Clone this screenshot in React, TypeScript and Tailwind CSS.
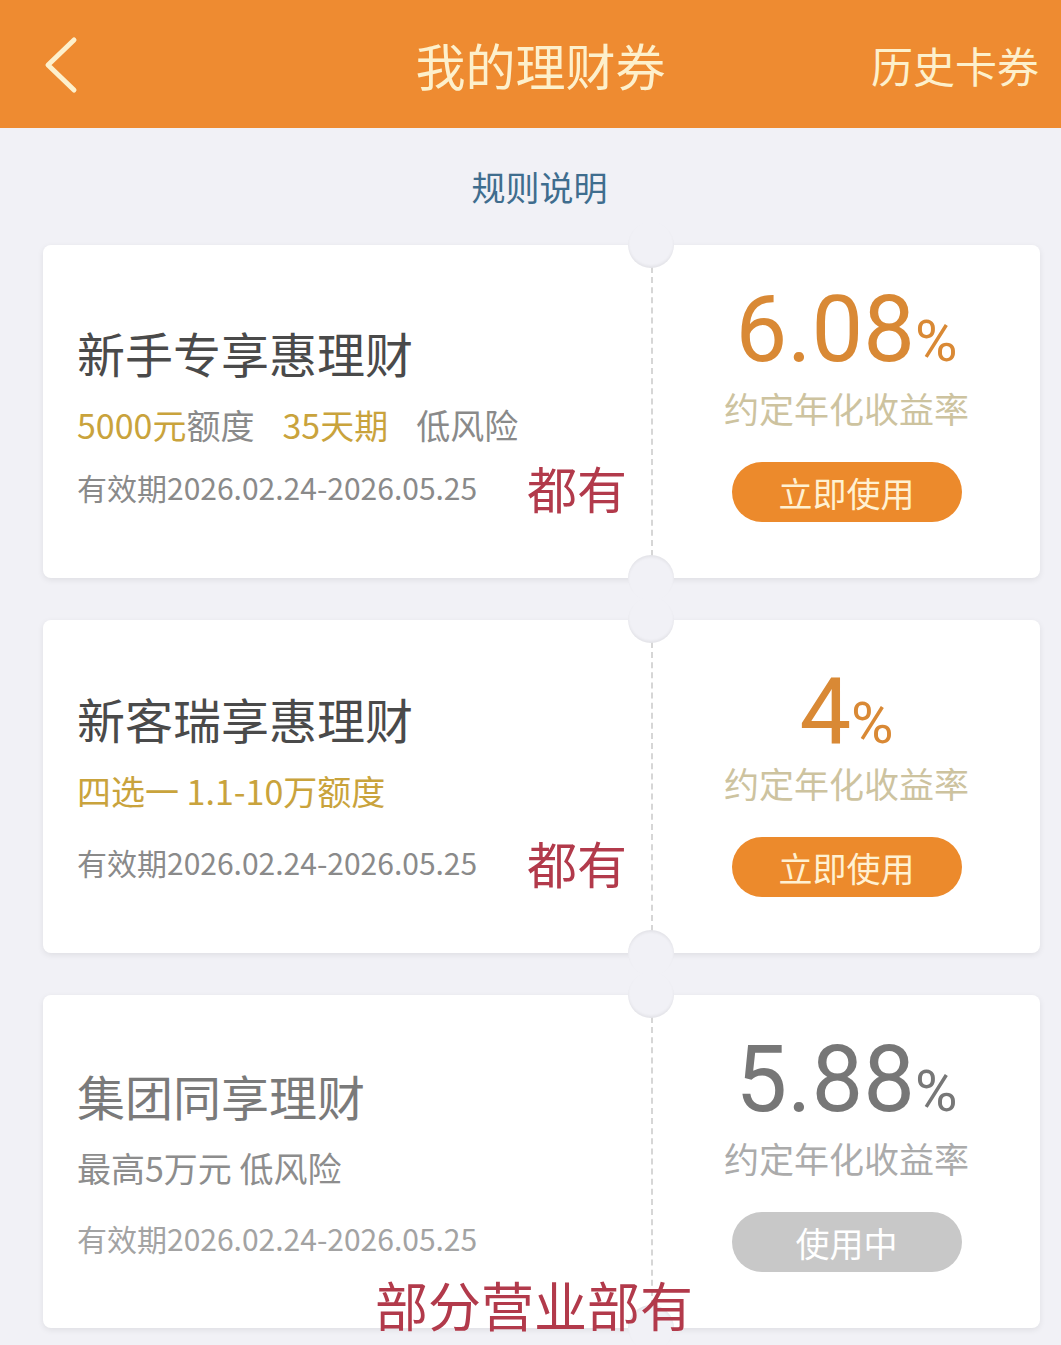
import React from 'react';

const cjk = { fontFamily: '"Noto Sans CJK SC", "Noto Sans", sans-serif' };
const num = { fontFamily: 'Roboto, "Noto Sans", sans-serif' };

type Coupon = {
  title: string;
  tags: React.ReactNode;
  rate: string;
  active: boolean;
  note?: string;
  top: number;
  dateGap: number;
  numShift: number;
};

function CouponCard({ c }: { c: Coupon }) {
  const titleColor = c.active ? 'text-[#4a4a4a]' : 'text-[#7a7a7a]';
  const dateColor = c.active ? 'text-[#8a8a8a]' : 'text-[#a3a3a3]';
  return (
    <div className="relative flex h-[333px] rounded-lg bg-white shadow-[0_2px_6px_rgba(0,0,0,0.08)]">
      <div className="flex w-[608px] flex-col pl-[34px] pr-[24px]" style={{ paddingTop: c.top }}>
        <div className={`h-[60px] text-[48px] leading-[60px] ${titleColor}`}>{c.title}</div>
        <div className="mt-[18px] h-[50px] text-[34px] leading-[50px]">{c.tags}</div>
        <div className="flex h-[44px] items-center justify-between" style={{ marginTop: c.dateGap }}>
          <span className={`text-[30px] leading-[44px] ${dateColor}`}>有效期2026.02.24-2026.05.25</span>
          {c.note && <span className="text-[50px] leading-[44px] text-[#b23a4b]">{c.note}</span>}
        </div>
      </div>

      <div className="border-l-2 border-dashed border-[#d6d6d6] my-[22px]" />

      <div className="flex flex-1 flex-col items-center pt-[40px]">
        <div
          className={`flex h-[90px] items-baseline leading-[90px] ${c.active ? 'text-[#d98935]' : 'text-[#777777]'}`}
          style={{ ...num, marginTop: c.numShift, marginBottom: -c.numShift }}
        >
          <span className="text-[92px]">{c.rate}</span>
          <span className="text-[58px]">%</span>
        </div>
        <div className={`mt-[11px] h-[44px] text-[35px] leading-[44px] ${c.active ? 'text-[#cdc39f]' : 'text-[#ababab]'}`}>
          约定年化收益率
        </div>
        <div
          className={`mt-[32px] flex h-[60px] w-[230px] items-center justify-center rounded-full text-[34px] ${
            c.active ? 'bg-[#ec8a2c] text-[#fff1d2]' : 'bg-[#c8c8c8] text-white'
          }`}
        >
          {c.active ? '立即使用' : '使用中'}
        </div>
      </div>

      <div className="absolute left-[585px] top-[-23px] h-[46px] w-[46px] rounded-full bg-[#f1f1f6] shadow-[inset_0_-2px_3px_rgba(0,0,0,0.06)]" />
      <div className="absolute bottom-[-23px] left-[585px] h-[46px] w-[46px] rounded-full bg-[#f1f1f6] shadow-[inset_0_2px_3px_rgba(0,0,0,0.06)]" />
    </div>
  );
}

export default function App() {
  const coupons: Coupon[] = [
    {
      title: '新手专享惠理财',
      tags: (
        <>
          <span className="text-[#c9a33c]">5000元</span>
          <span className="text-[#8a8a8a]">额度</span>
          <span className="ml-[28px] text-[#c9a33c]">35天期</span>
          <span className="ml-[28px] text-[#8a8a8a]">低风险</span>
        </>
      ),
      rate: '6.08',
      active: true,
      note: '都有',
      top: 77,
      dateGap: 15,
      numShift: 0,
    },
    {
      title: '新客瑞享惠理财',
      tags: <span className="text-[#c9a33c]">四选一 1.1-10万额度</span>,
      rate: '4',
      active: true,
      note: '都有',
      top: 68,
      dateGap: 24,
      numShift: 7,
    },
    {
      title: '集团同享理财',
      tags: <span className="text-[#8d8d8d]">最高5万元 低风险</span>,
      rate: '5.88',
      active: false,
      top: 70,
      dateGap: 23,
      numShift: 0,
    },
  ];

  return (
    <div className="relative min-h-[1345px] overflow-hidden bg-[#f1f1f6]" style={cjk}>
      <div className="relative flex h-[128px] items-center justify-center bg-[#ee8b31]">
        <svg className="absolute left-[40px] top-[36px]" width="40" height="58" viewBox="0 0 40 58">
          <path d="M34 4 L8 29 L34 54" fill="none" stroke="#fdf0cc" strokeWidth="5" strokeLinecap="round" strokeLinejoin="round" />
        </svg>
        <span className="ml-[20px] text-[50px] text-[#fdf0cc]">我的理财券</span>
        <span className="absolute right-[22px] text-[42px] text-[#fdf0cc]">历史卡券</span>
      </div>

      <div className="flex h-[117px] items-center justify-center pl-[18px] text-[34px] text-[#3f6d8e]">规则说明</div>

      <div className="flex flex-col gap-[42px] pl-[43px] pr-[21px]">
        {coupons.map((c, i) => (
          <CouponCard key={i} c={c} />
        ))}
      </div>

      <div className="pointer-events-none absolute left-[375px] top-[1272px] text-[53px] leading-[64px] text-[#b23a4b]">
        部分营业部有
      </div>
    </div>
  );
}
